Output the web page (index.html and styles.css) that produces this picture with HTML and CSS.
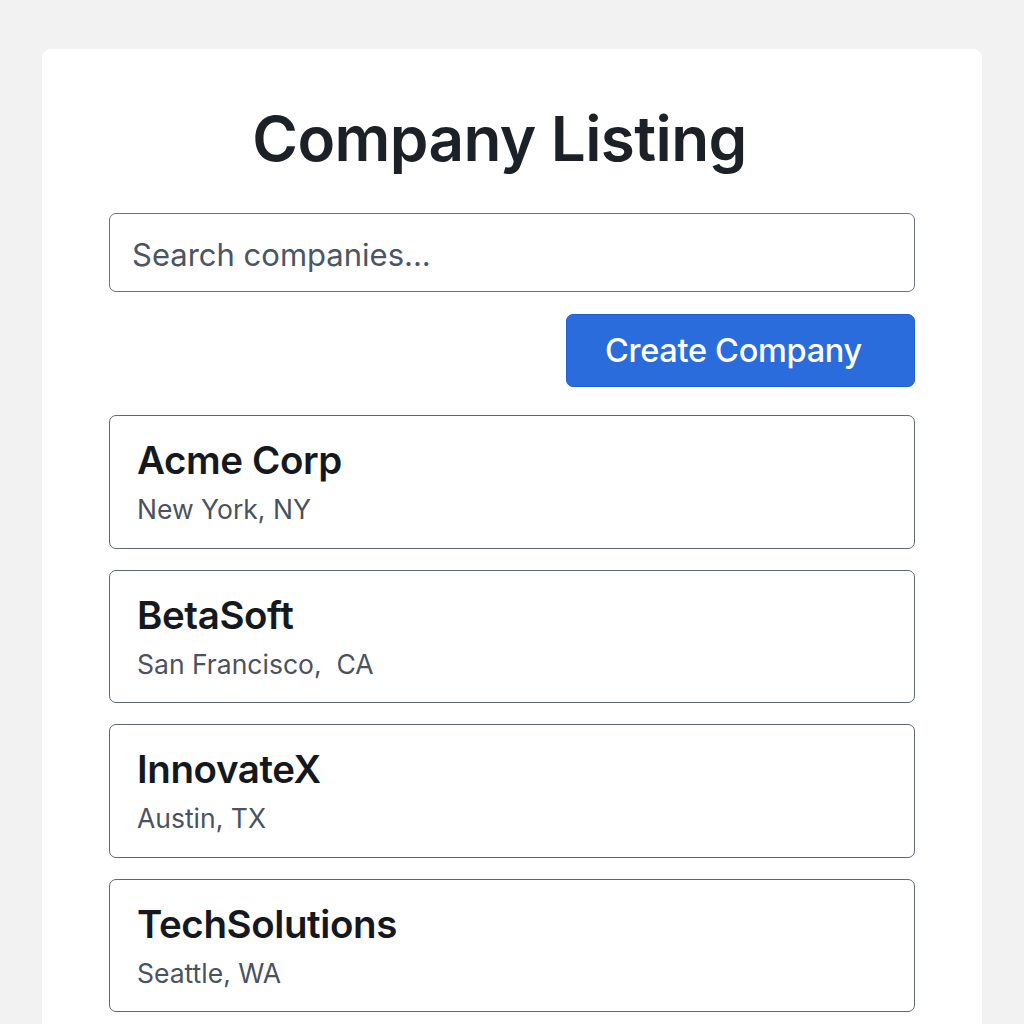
FILE: index.html
```html
<!DOCTYPE html>
<html lang="en">
<head>
<meta charset="utf-8">
<title>Company Listing</title>
<link rel="stylesheet" href="styles.css">
</head>
<body>
<main class="panel">
  <h1 class="title">Company Listing</h1>
  <input class="search" type="text" placeholder="Search companies...">
  <div class="actions">
    <button class="btn-create" type="button">Create Company</button>
  </div>
  <ul class="company-list">
    <li class="company">
      <div class="company-name">Acme Corp</div>
      <div class="company-loc">New York, NY</div>
    </li>
    <li class="company">
      <div class="company-name">BetaSoft</div>
      <div class="company-loc">San Francisco,&nbsp; CA</div>
    </li>
    <li class="company">
      <div class="company-name">InnovateX</div>
      <div class="company-loc">Austin, TX</div>
    </li>
    <li class="company">
      <div class="company-name">TechSolutions</div>
      <div class="company-loc">Seattle, WA</div>
    </li>
  </ul>
</main>
</body>
</html>
```
FILE: styles.css
```css
* { box-sizing: border-box; }
html, body { margin: 0; padding: 0; }
body {
  background: #f2f2f2;
  font-family: Inter, "Noto Sans", "Liberation Sans", sans-serif;
  color: #1a1f24;
}
.panel {
  width: 940px;
  margin: 49px 0 0 42px;
  background: #ffffff;
  border-radius: 9px;
  padding: 50px 67px 40px;
}
.title {
  margin: 0;
  padding-right: 25px;
  text-align: center;
  font-size: 62px;
  font-weight: 600;
  line-height: 80px;
  letter-spacing: -0.6px;
  color: #1b2126;
}
.search {
  display: block;
  width: 100%;
  height: 79px;
  margin-top: 34px;
  border: 1.5px solid #6b7280;
  border-radius: 7px;
  padding: 4px 22px 0;
  font-family: inherit;
  font-size: 31px;
  color: #1f2937;
  background: #fff;
  outline: none;
}
.search::placeholder { color: #4b5563; }
.actions {
  display: flex;
  justify-content: flex-end;
  margin-top: 22px;
}
.btn-create {
  width: 349px;
  height: 73px;
  border: 1px solid #1f5fd0;
  border-radius: 7px;
  background: #2b6cdc;
  color: #ffffff;
  font-family: inherit;
  font-size: 32.5px;
  font-weight: 500;
  padding: 0 14px 0 0;
  letter-spacing: -0.3px;
}
.company-list {
  list-style: none;
  margin: 28px 0 0;
  padding: 0;
  display: flex;
  flex-direction: column;
  gap: 21px;
}
.company {
  height: 133.5px;
  border: 1.5px solid #5f6773;
  border-radius: 7px;
  padding: 21px 27px 0;
}
.company-name {
  font-size: 38.5px;
  font-weight: 600;
  line-height: 46px;
  color: #15191d;
  letter-spacing: -0.4px;
}
.company-loc {
  margin-top: 8px;
  font-size: 26.5px;
  line-height: 36px;
  color: #4a5260;
}
```
